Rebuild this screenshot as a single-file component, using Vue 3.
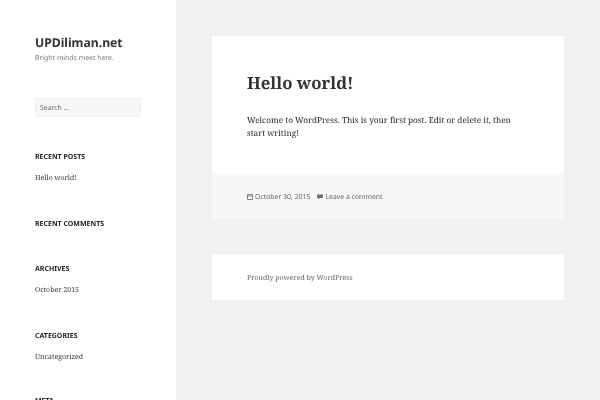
<script setup>
const sections = [
  { title: 'Recent Posts', items: ['Hello world!'] },
  { title: 'Recent Comments', items: [] },
  { title: 'Archives', items: ['October 2015'] },
  { title: 'Categories', items: ['Uncategorized'] },
  { title: 'Meta', items: [] }
]
</script>

<template>
  <div class="page">
    <aside class="sidebar">
      <h1 class="site-title">UPDiliman.net</h1>
      <p class="tagline">Bright minds meet here.</p>
      <div class="search"><span>Search …</span></div>
      <div class="widgets">
        <section v-for="s in sections" :key="s.title" class="widget">
          <h2>{{ s.title }}</h2>
          <p v-for="i in s.items" :key="i">{{ i }}</p>
        </section>
      </div>
    </aside>
    <main class="main">
      <article class="card">
        <div class="body">
          <h2 class="post-title">Hello world!</h2>
          <p class="post-text">Welcome to WordPress. This is your first post. Edit or delete it, then start writing!</p>
        </div>
        <footer class="meta">
          <span class="meta-item">
            <svg width="6" height="6" viewBox="0 0 6 6"><path d="M0.500 0.500h5v5h-5zM0.500 2h5" fill="none" stroke="#808080"/></svg>
            October 30, 2015
          </span>
          <span class="meta-item">
            <svg width="6" height="6" viewBox="0 0 6 6"><path d="M0 0.500h6v3.500H3L1.500 5.500V4H0z" fill="#707070"/></svg>
            Leave a comment
          </span>
        </footer>
      </article>
      <div class="card colophon"><span>Proudly powered by WordPress</span></div>
    </main>
  </div>
</template>

<style>
html, body { margin: 0; overflow: hidden; }
</style>

<style scoped>
.page { display: flex; width: 600px; height: 400px; overflow: hidden; background: #f1f1f1; color: #333; font-family: "Noto Serif", "DejaVu Serif", serif; text-rendering: geometricPrecision; }
.sidebar { box-sizing: border-box; width: 176px; height: 400px; flex: none; background: #fff; padding: 33px 35px 0; overflow: hidden; }
.site-title, .tagline, .search span, .widget h2, .widget p, .post-title, .post-text, .meta-item, .colophon span { filter: blur(0.2px); }
.search span, .colophon span { display: inline-block; }
.site-title { margin: 0; font: 700 12.200px/20px "Noto Sans", sans-serif; color: #333; }
.tagline { margin: 0; font: 400 6.900px/12px "Noto Sans", sans-serif; color: #777; }
.search { box-sizing: border-box; height: 19px; margin-top: 33px; padding: 0 4px; background: #f7f7f7; border: 1px solid #f0f0f0; font: 400 6.900px/19px "Noto Sans", sans-serif; color: #666; }
.widgets { margin-top: 34px; display: flex; flex-direction: column; gap: 32.500px; }
.widget:last-child { margin-top: -1.500px; }
.widget h2 { margin: 0; font: 700 7px/13px "Noto Sans", sans-serif; text-transform: uppercase; color: #222; }
.widget p { margin: 8px 0 0; font-size: 7px; line-height: 13px; color: #333; }
.main { flex: 1; padding: 36px 36px 0; min-width: 0; }
.card { background: #fff; box-shadow: 0 0 1px rgba(0,0,0,.06); }
.body { padding: 35px; height: 68px; }
.post-title { margin: 0; font-size: 16.800px; line-height: 23px; font-weight: 700; }
.post-text { margin: 19.500px 0 0; max-width: 266px; font-size: 8.250px; line-height: 13.500px; color: #2a2a2a; }
.meta { display: flex; gap: 7px; padding: 1px 35px 0; box-sizing: border-box; height: 45px; align-items: center; background: #f7f7f7; font: 400 6.900px/13px "Noto Sans", sans-serif; color: #666; }
.meta-item { display: inline-flex; align-items: center; gap: 2px; }
.colophon { margin-top: 35px; height: 46px; padding: 0 35px; font-size: 7px; line-height: 49px; color: #666; }
</style>
